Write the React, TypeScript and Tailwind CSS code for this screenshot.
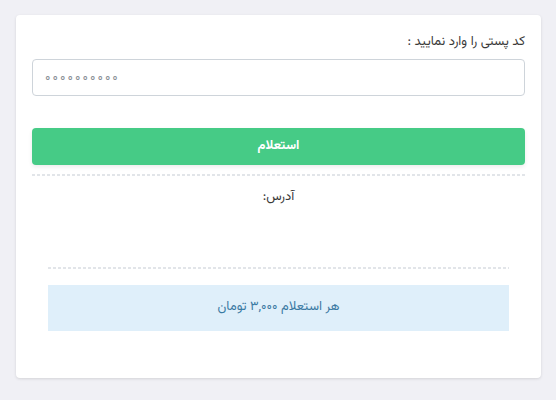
export default function App() {
  const zeros = Array.from({ length: 10 }, (_, i) => i);
  return (
    <div className="min-h-[400px] w-[556px] bg-[#f0f0f5] pt-[15px] px-[16px]" style={{ fontFamily: 'Vazirmatn, "DejaVu Sans", sans-serif' }}>
      <div dir="rtl" className="w-[525px] h-[363px] bg-white rounded-[4px] shadow-[0_1px_3px_rgba(0,0,0,0.12)] px-[16px] pt-[17px]">
        <div className="text-[13px] text-[#3a3a3a] leading-[20px] h-[20px]">کد پستی را وارد نمایید :</div>
        <div className="mt-[7px] h-[37px] border border-[#ced4da] rounded-[4px] flex items-center px-[12px]" dir="ltr">
          <span className="flex gap-[2px] text-[13px] leading-[16px] text-[#8a8f96]">
            {zeros.map((i) => (
              <span key={i}>۰</span>
            ))}
          </span>
        </div>
        <button className="mt-[32px] w-full h-[37px] rounded-[4px] bg-[#46cb86] text-white text-[13px] font-bold shadow-[0_2px_4px_rgba(0,0,0,0.08)]">استعلام</button>
        <div className="mt-[9px] h-[2px] bg-[repeating-linear-gradient(to_right,#e2e5e9_0_3px,transparent_3px_5px)]"></div>
        <div className="mt-[11px] text-center text-[13px] text-[#3a3a3a] leading-[20px]">آدرس:</div>
        <div className="mx-[16px]">
          <div className="mt-[60px] h-[2px] bg-[repeating-linear-gradient(to_right,#e2e5e9_0_3px,transparent_3px_5px)]"></div>
          <div className="mt-[16px] h-[46px] bg-[#dfeffa] flex items-center justify-center text-[13px] text-[#3b7aa3]">هر استعلام ۳,۰۰۰ تومان</div>
        </div>
      </div>
    </div>
  );
}
